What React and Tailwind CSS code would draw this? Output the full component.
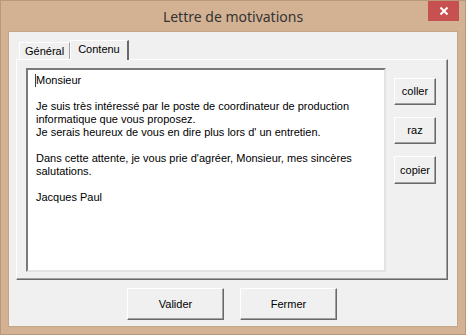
export default function App() {
  const btn =
    "flex items-center justify-center bg-[#f0f0f0] border border-t-white border-l-white border-r-[#696969] border-b-[#696969] shadow-[inset_-1px_-1px_0_#a0a0a0] text-[11px] text-black";
  return (
    <div
      className="w-[466px] h-[335px] bg-[#d3b293] border border-[#b89878] flex flex-col relative"
      style={{ fontFamily: '"Liberation Sans", Arial, sans-serif' }}
    >
      <div className="h-[30px] flex items-center justify-center">
        <span
          className="text-[14px] text-[#333] mt-[1px]"
          style={{ fontFamily: '"Noto Sans", "Open Sans", sans-serif' }}
        >
          Lettre de motivations
        </span>
      </div>
      <div className="absolute right-[6px] top-0 w-[31px] h-[20px] bg-[#c75050] flex items-center justify-center">
        <svg width="10" height="10" viewBox="0 0 10 10">
          <path d="M1.5 1.5 L8.5 8.5 M8.5 1.5 L1.5 8.5" stroke="white" strokeWidth="2" />
        </svg>
      </div>
      <div className="mx-[7px] h-[296px] bg-[#f0f0f0] border border-[#c4a686] flex flex-col">
        <div className="h-[27px] flex items-end pl-[10px] pt-[7px]">
          <div className="h-[17px] px-[5px] flex items-center border-t border-l border-r border-t-white border-l-white border-r-[#a0a0a0] text-[11px] text-black">
            Général
          </div>
          <div className="h-[20px] -mb-[1px] relative z-10 bg-[#f0f0f0] px-[7px] pb-[3px] flex items-center border-t border-l border-r-2 border-t-white border-l-white border-r-[#696969] text-[11px] text-black">
            Contenu
          </div>
        </div>
        <div className="ml-[7px] w-[432px] h-[221px] border border-t-white border-l-white border-r-[#696969] border-b-[#696969] shadow-[inset_-1px_-1px_0_#a0a0a0] flex pt-[8px] pl-[9px] gap-[8px]">
          <div className="w-[360px] h-[204px] bg-white border-2 border-t-[#7a7a7a] border-l-[#7a7a7a] border-r-[#e3e3e3] border-b-[#e3e3e3] pl-[8px] pt-[4px] text-[11px] leading-[13px] text-black">
            <div className="relative">
              <span className="absolute -left-[1px] top-[0px] w-[1px] h-[13px] bg-[#404040]" />
              Monsieur
            </div>
            <div className="h-[13px]" />
            <div>Je suis très intéressé par le poste de coordinateur de production</div>
            <div>informatique que vous proposez.</div>
            <div>Je serais heureux de vous en dire plus lors d' un entretien.</div>
            <div className="h-[13px]" />
            <div>Dans cette attente, je vous prie d'agréer, Monsieur, mes sincères</div>
            <div>salutations.</div>
            <div className="h-[13px]" />
            <div>Jacques Paul</div>
          </div>
          <div className="flex flex-col gap-[12px] pt-[10px]">
            <div className={btn + " w-[42px] h-[27px]"}>coller</div>
            <div className={btn + " w-[42px] h-[27px]"}>raz</div>
            <div className={btn + " w-[42px] h-[28px]"}>copier</div>
          </div>
        </div>
        <div className="flex justify-center gap-[16px] mt-[8px] pr-[2px]">
          <div className={btn + " w-[97px] h-[32px]"}>Valider</div>
          <div className={btn + " w-[97px] h-[32px]"}>Fermer</div>
        </div>
      </div>
    </div>
  );
}
